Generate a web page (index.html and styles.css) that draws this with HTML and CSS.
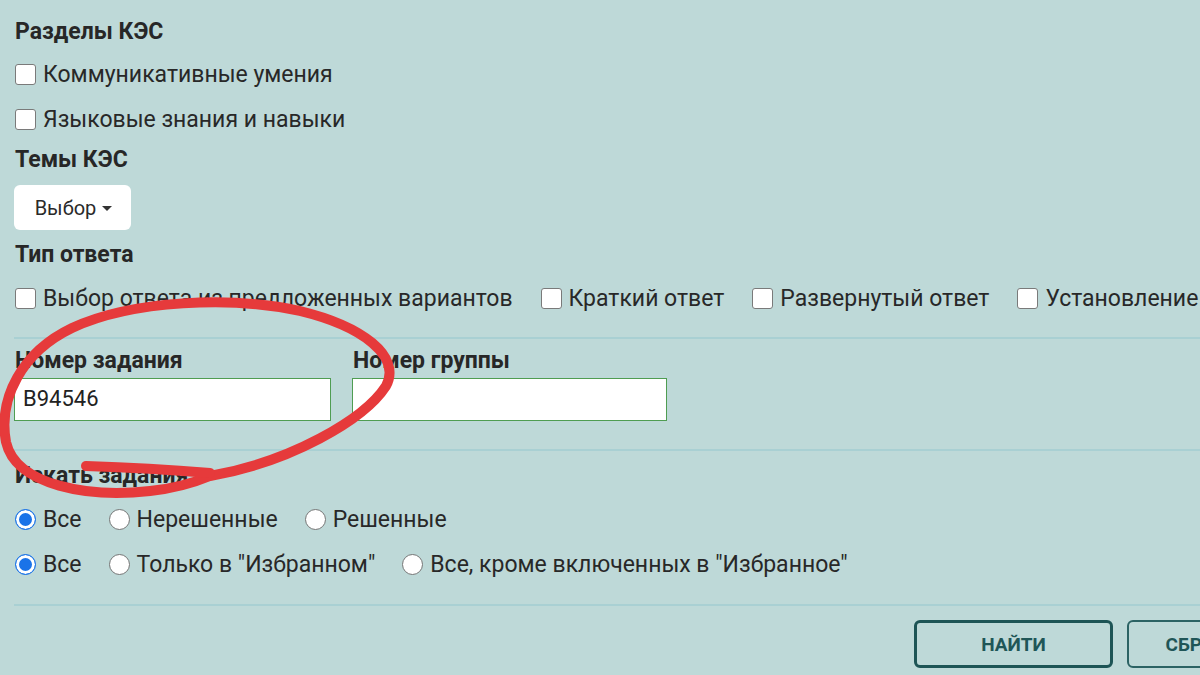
FILE: index.html
```html
<!DOCTYPE html>
<html lang="ru">
<head>
<meta charset="utf-8">
<link rel="stylesheet" href="styles.css">
</head>
<body>
<div class="page">
  <div class="heading h-first">Разделы КЭС</div>
  <label class="check-row"><span class="cb"></span>Коммуникативные умения</label>
  <label class="check-row"><span class="cb"></span>Языковые знания и навыки</label>

  <div class="heading h-themes">Темы КЭС</div>
  <button class="dropdown">Выбор <span class="caret"></span></button>

  <div class="heading h-type">Тип ответа</div>
  <div class="inline-row type-row">
    <label class="item"><span class="cb"></span>Выбор ответа из предложенных вариантов</label>
    <label class="item"><span class="cb"></span>Краткий ответ</label>
    <label class="item"><span class="cb"></span>Развернутый ответ</label>
    <label class="item"><span class="cb"></span>Установление соответствия</label>
  </div>

  <div class="divider d1"></div>

  <div class="fields">
    <div class="field">
      <div class="heading field-label">Номер задания</div>
      <div class="input w1">B94546</div>
    </div>
    <div class="field">
      <div class="heading field-label">Номер группы</div>
      <div class="input w2"></div>
    </div>
  </div>

  <div class="divider d2"></div>

  <div class="heading h-search">Искать задания</div>
  <div class="inline-row radio-row first-radio">
    <label class="item"><span class="rb on"></span>Все</label>
    <label class="item"><span class="rb"></span>Нерешенные</label>
    <label class="item"><span class="rb"></span>Решенные</label>
  </div>
  <div class="inline-row radio-row">
    <label class="item"><span class="rb on"></span>Все</label>
    <label class="item"><span class="rb"></span>Только в "Избранном"</label>
    <label class="item"><span class="rb"></span>Все, кроме включенных в "Избранное"</label>
  </div>

  <div class="divider d3"></div>

  <div class="actions">
    <button class="btn primary">НАЙТИ</button>
    <button class="btn secondary">СБРОСИТЬ</button>
  </div>

  <svg class="scribble" width="420" height="220" viewBox="0 290 420 220" fill="none">
    <path d="M210 476 C 290 462, 364 420, 386 386 C 402 356, 362 326, 300 311 C 232 296, 132 300, 72 328 C 22 352, -2 398, 6 442 C 16 486, 90 498, 150 491 C 180 488, 198 481, 210 476" stroke="#e63a3b" stroke-width="10" stroke-linecap="round"/>
    <path d="M86 466 Q 150 468 210 473" stroke="#e63a3b" stroke-width="10" stroke-linecap="round"/>
  </svg>
</div>
</body>
</html>
```

FILE: styles.css
```css
html, body {
  margin: 0;
  padding: 0;
  background: #bed9d8;
  overflow: hidden;
}
body {
  width: 1200px;
  height: 675px;
  font-family: Roboto, "Noto Sans", sans-serif;
  color: #282828;
}
.page {
  position: relative;
  width: 1400px;
  padding-left: 14px;
  display: flex;
  flex-direction: column;
  align-items: flex-start;
}
.heading {
  font-weight: 700;
  font-size: 23px;
  line-height: 30px;
  color: #272727;
  padding-left: 1px;
}
.h-first { margin-top: 17px; margin-bottom: 5px; }
.h-themes { margin-top: 3px; }
.h-type { margin-top: 10px; }
.h-search { margin-top: 11px; line-height: 28px; }

.check-row {
  display: flex;
  align-items: center;
  height: 45px;
  font-size: 23px;
  padding-left: 1px;
}
.cb {
  width: 19px;
  height: 19px;
  border: 1px solid #7a7a7a;
  border-radius: 3px;
  background: #fff;
  margin-right: 7px;
  flex: none;
}
.dropdown {
  margin-top: 10px;
  height: 45px;
  width: 117px;
  background: #fff;
  border: none;
  border-radius: 6px;
  font-family: inherit;
  font-size: 20px;
  color: #2a2a2a;
  display: flex;
  align-items: center;
  justify-content: center;
  gap: 6px;
  padding: 0 0 0 2px;
}
.caret {
  width: 0;
  height: 0;
  border-left: 5px solid transparent;
  border-right: 5px solid transparent;
  border-top: 5px solid #333;
  margin-top: 2px;
}
.inline-row {
  display: flex;
  align-items: center;
  gap: 28px;
  padding-left: 1px;
  font-size: 23px;
  white-space: nowrap;
}
.inline-row .item {
  display: flex;
  align-items: center;
}
.type-row { height: 44px; margin-top: 6px; }
.radio-row { height: 45px; gap: 27px; }
.first-radio { margin-top: 7px; }
.rb {
  width: 19px;
  height: 19px;
  border: 1px solid #767676;
  border-radius: 50%;
  background: #fff;
  margin-right: 7px;
  flex: none;
  box-sizing: content-box;
}
.rb.on {
  background: #1a73e8;
  border-color: #1a73e8;
  box-shadow: inset 0 0 0 3px #fff;
}
.divider {
  align-self: stretch;
  height: 2px;
  background: #a9d0d3;
}
.d1 { margin-top: 17px; }
.d2 { margin-top: 28px; }
.d3 { margin-top: 17px; }

.fields {
  display: flex;
  gap: 21px;
  margin-top: 8px;
}
.field-label { line-height: 28px; margin-bottom: 3px; }
.input {
  height: 43px;
  box-sizing: border-box;
  border: 1.5px solid #4f9d52;
  background: #fff;
  font-size: 22px;
  line-height: 40px;
  padding-left: 8px;
  color: #222;
}
.w1 { width: 317px; }
.w2 { width: 315px; }

.actions {
  align-self: stretch;
  display: flex;
  justify-content: flex-end;
  gap: 14px;
  margin-top: 14px;
  padding-right: 111px;
}
.btn {
  height: 48px;
  width: 199px;
  border-radius: 6px;
  background: transparent;
  font-family: inherit;
  font-weight: 700;
  font-size: 19px;
  color: #1f5657;
  box-sizing: border-box;
  flex: none;
}
.primary { border: 3px solid #1e5556; }
.secondary { border: 2px solid #2c6364; width: 176px; }

.scribble {
  position: absolute;
  left: 0;
  top: 290px;
  pointer-events: none;
}
```
